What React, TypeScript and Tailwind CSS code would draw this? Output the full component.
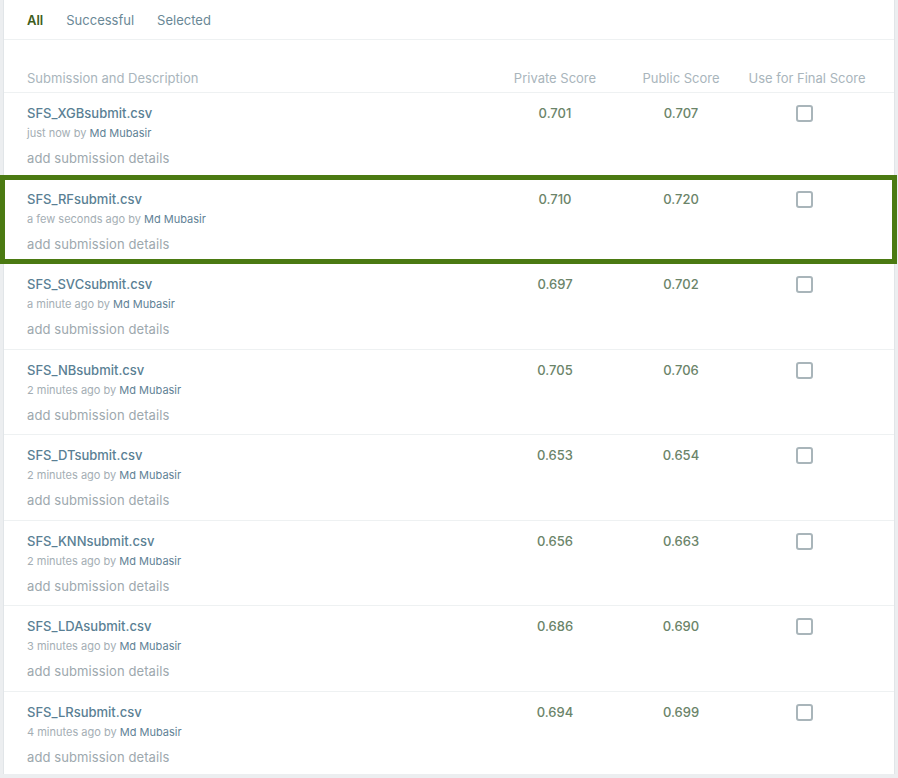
import React from 'react';

type Submission = {
  file: string;
  when: string;
  priv: string;
  pub: string;
  selected?: boolean;
};

const SUBMISSIONS: Submission[] = [
  { file: 'SFS_XGBsubmit.csv', when: 'just now', priv: '0.701', pub: '0.707' },
  { file: 'SFS_RFsubmit.csv', when: 'a few seconds ago', priv: '0.710', pub: '0.720', selected: true },
  { file: 'SFS_SVCsubmit.csv', when: 'a minute ago', priv: '0.697', pub: '0.702' },
  { file: 'SFS_NBsubmit.csv', when: '2 minutes ago', priv: '0.705', pub: '0.706' },
  { file: 'SFS_DTsubmit.csv', when: '2 minutes ago', priv: '0.653', pub: '0.654' },
  { file: 'SFS_KNNsubmit.csv', when: '2 minutes ago', priv: '0.656', pub: '0.663' },
  { file: 'SFS_LDAsubmit.csv', when: '3 minutes ago', priv: '0.686', pub: '0.690' },
  { file: 'SFS_LRsubmit.csv', when: '4 minutes ago', priv: '0.694', pub: '0.699' },
];

const App: React.FC = () => {
  return (
    <div className="w-[898px] h-[778px] bg-[#eceef0] overflow-hidden font-['Inter',sans-serif]">
      <div className="ml-[3px] w-[892px] h-[774px] bg-white border-x border-[#e1e5e8]">
        {/* Tabs */}
        <div className="h-[40px] flex items-center gap-[23px] pl-[23px] pt-[2px] border-b border-[#eef1f2] text-[13px]">
          <span className="font-semibold text-[#3f5d1c]">All</span>
          <span className="text-[#6a8896]">Successful</span>
          <span className="text-[#6a8896]">Selected</span>
        </div>

        {/* Column headers */}
        <div className="h-[53px] grid grid-cols-[1fr_126px_126px_126px] pr-[24px] items-end pb-[4px] border-b border-[#eef1f2] text-[13px] leading-[20px] text-[#a9b5bc]">
          <span className="pl-[23px]">Submission and Description</span>
          <span className="text-center">Private Score</span>
          <span className="text-center">Public Score</span>
          <span className="text-center whitespace-nowrap">Use for Final Score</span>
        </div>

        {/* Rows */}
        {SUBMISSIONS.map((s) => (
          <div
            key={s.file}
            className="relative h-[85.5px] grid grid-cols-[1fr_126px_126px_126px] pr-[24px] border-b border-[#eef1f2] last:border-b-0"
          >
            <div className="pl-[23px] pt-[10px]">
              <p className="text-[13px] leading-[20px] font-medium text-[#5a7f94]">{s.file}</p>
              <p className="mt-[2px] text-[11px] leading-[16px] text-[#a4aeb4]">
                {s.when} by <span className="text-[#5f8296]">Md Mubasir</span>
              </p>
              <p className="mt-[7px] text-[13px] leading-[20px] tracking-[0.1px] text-[#9da8ae]">add submission details</p>
            </div>
            <div className="pt-[10px] text-center text-[13px] leading-[20px] font-medium text-[#6b8469]">{s.priv}</div>
            <div className="pt-[10px] text-center text-[13px] leading-[20px] font-medium text-[#6b8469]">{s.pub}</div>
            <div className="pt-[12px] flex justify-center">
              <div className="ml-[-6px] w-[17px] h-[17px] rounded-[3px] border-2 border-[#a9b5ba]" />
            </div>
            {s.selected && (
              <div className="absolute -top-[4px] -bottom-[1px] -left-[4px] -right-[3px] border-[5px] border-[#4b7a12] pointer-events-none" />
            )}
          </div>
        ))}
      </div>
    </div>
  );
};

export default App;
